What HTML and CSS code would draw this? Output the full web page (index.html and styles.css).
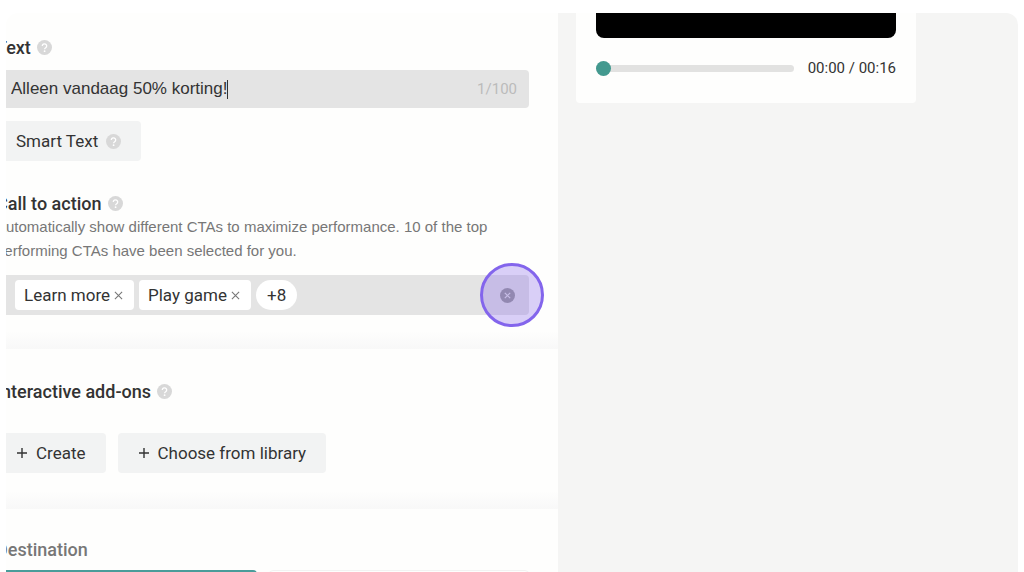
FILE: index.html
```html
<!DOCTYPE html>
<html lang="en">
<head>
    <meta charset="UTF-8">
    <meta name="viewport" content="width=device-width, initial-scale=1.0">
    <title>Ad editor</title>
    <link rel="stylesheet" href="styles.css">
</head>
<body>

<svg class="sprite" aria-hidden="true">
    <symbol id="help" viewBox="0 0 15 15">
        <circle cx="7.5" cy="7.5" r="7.5" fill="#d8d8d8"/>
        <path d="M5.3 6a2.2 2.1 0 1 1 3.4 1.7c-.8.5-1.1.8-1.1 1.5" fill="none" stroke="#fff" stroke-width="1.3"/>
        <circle cx="7.6" cy="11.2" r=".9" fill="#fff"/>
    </symbol>
    <symbol id="cross" viewBox="0 0 10 10">
        <path d="M1 1l8 8M9 1l-8 8" fill="none" stroke="#777" stroke-width="1.2"/>
    </symbol>
    <symbol id="plus" viewBox="0 0 12 12">
        <path d="M6 1v10M1 6h10" fill="none" stroke="#333" stroke-width="1.4"/>
    </symbol>
</svg>

<div class="frame">
    <main class="form">
        <section class="panel first">
            <div class="heading">
                <label class="title" for="ad-text">Text</label>
                <svg class="help"><use href="#help"/></svg>
            </div>
            <div class="field">
                <input type="text" id="ad-text" value="Alleen vandaag 50% korting!">
                <span class="caret"></span>
                <span class="count">1/100</span>
            </div>
            <button class="btn">Smart Text <svg class="help"><use href="#help"/></svg></button>

            <div class="heading cta">
                <h2 class="title">Call to action</h2>
                <svg class="help"><use href="#help"/></svg>
            </div>
            <p class="hint">Automatically show different CTAs to maximize performance. 10 of the top performing CTAs have been selected for you.</p>
            <div class="tags">
                <span class="tag">Learn more<button class="remove" aria-label="Remove Learn more"><svg><use href="#cross"/></svg></button></span>
                <span class="tag">Play game<button class="remove" aria-label="Remove Play game"><svg><use href="#cross"/></svg></button></span>
                <span class="tag more">+8</span>
                <button class="clear" aria-label="Clear all">
                    <svg viewBox="0 0 15 15">
                        <circle cx="7.5" cy="7.5" r="7.5" fill="#999"/>
                        <path d="M4.8 4.8l5.4 5.4M10.2 4.8l-5.4 5.4" fill="none" stroke="#e4e4e4" stroke-width="1.2"/>
                    </svg>
                </button>
                <span class="highlight"></span>
            </div>
        </section>

        <section class="panel">
            <div class="heading">
                <h2 class="title">Interactive add-ons</h2>
                <svg class="help"><use href="#help"/></svg>
            </div>
            <div class="actions">
                <button class="btn"><svg class="plus"><use href="#plus"/></svg>Create</button>
                <button class="btn"><svg class="plus"><use href="#plus"/></svg>Choose from library</button>
            </div>
        </section>

        <section class="panel last">
            <div class="heading">
                <h2 class="title muted">Destination</h2>
            </div>
            <div class="options">
                <div class="option selected"></div>
                <div class="option"></div>
            </div>
        </section>
    </main>

    <aside class="preview">
        <div class="player">
            <div class="video"></div>
            <div class="controls">
                <input type="range" min="0" max="16" value="0" aria-label="Seek">
                <span class="time">00:00 / 00:16</span>
            </div>
        </div>
    </aside>
</div>

</body>
</html>
```
FILE: styles.css
```css
* {
    box-sizing: border-box;
}
body {
    margin: 0;
    background: #fff;
    font-family: Roboto, 'Liberation Sans', sans-serif;
    font-size: 17px;
    color: #333;
}
button, input {
    font: inherit;
    color: inherit;
    border: none;
}
button {
    cursor: pointer;
}
.sprite {
    display: none;
}
.frame {
    display: flex;
    height: calc(100vh - 13px);
    margin: 13px 6px 0;
    border-radius: 12px 12px 0 0;
    overflow: hidden;
}

/* left column, scrolled a little under the frame edge */
.form {
    flex: 0 0 562px;
    margin-left: -10px;
}
.panel {
    padding: 30px 29px 36px 0;
    background: linear-gradient(to top, #f8f8f8, #fefefd 18px);
}
.panel.first {
    padding-top: 22px;
    padding-bottom: 34px;
}
.panel.last {
    padding-top: 28px;
    background: #fefefd;
}
.heading {
    display: flex;
    align-items: center;
    gap: 6px;
    height: 24px;
}
.title {
    margin: 0;
    font-size: 18px;
    font-weight: 500;
}
.title.muted {
    color: #777;
}
.help {
    width: 15px;
    height: 15px;
}
.field, .tags {
    display: flex;
    align-items: center;
    background: #e4e4e4;
    border-radius: 4px;
}
.field {
    height: 38px;
    margin: 11px 0 13px;
    padding: 0 12px 0 15px;
}
.field input {
    field-sizing: content;
    padding: 0;
    background: none;
    outline: none;
    font-family: 'Liberation Sans', sans-serif;
}
.caret {
    width: 1px;
    height: 19px;
    background: #333;
}
.count {
    margin-left: auto;
    font-size: 15px;
    color: #bbb;
}
.btn {
    display: inline-flex;
    align-items: center;
    gap: 8px;
    height: 40px;
    padding: 0 20px;
    background: #f2f3f3;
    border-radius: 4px;
}
.cta {
    margin-top: 30px;
}
.hint {
    margin: 0 0 12px;
    font-family: 'Liberation Sans', sans-serif;
    font-size: 15px;
    line-height: 24px;
    color: #777;
}
.tags {
    position: relative;
    gap: 5px;
    height: 40px;
    padding: 0 14px 0 19px;
}
.tag {
    display: flex;
    align-items: center;
    gap: 4px;
    height: 30px;
    padding: 0 11px 0 9px;
    background: #fff;
    border-radius: 4px;
}
.tag.more {
    padding: 0 11px;
    border-radius: 15px;
}
.remove, .clear {
    display: flex;
    padding: 0;
    background: none;
}
.remove svg {
    width: 9px;
    height: 9px;
}
.clear {
    margin-left: auto;
}
.clear svg {
    width: 15px;
    height: 15px;
}
.highlight {
    position: absolute;
    top: -12px;
    right: -15px;
    width: 64px;
    height: 64px;
    border: 3px solid #8365ec;
    border-radius: 50%;
    background: rgba(131, 101, 236, 0.3);
    pointer-events: none;
}
.actions {
    display: flex;
    gap: 12px;
    margin-top: 30px;
}
.plus {
    width: 12px;
    height: 12px;
}
.options {
    display: grid;
    grid-template-columns: 1fr 1fr;
    gap: 12px;
    margin-top: 9px;
}
.option {
    height: 60px;
    border: 1px solid #f2f2f2;
    border-radius: 4px;
}
.option.selected {
    border: 2px solid #4a9c9a;
}

/* right column */
.preview {
    flex: 1;
    padding-left: 18px;
    background: #f5f5f4;
}
.player {
    max-width: 340px;
    padding: 0 20px 25px;
    background: #fefefd;
    border-radius: 0 0 4px 4px;
}
.video {
    height: 25px;
    background: #000;
    border-radius: 0 0 8px 8px;
}
.controls {
    display: flex;
    align-items: center;
    gap: 14px;
    height: 20px;
    margin-top: 20px;
}
.controls input {
    flex: 1;
    min-width: 0;
    height: 7px;
    margin: 0;
    appearance: none;
    background: #e2e2e1;
    border-radius: 4px;
}
.controls input::-webkit-slider-thumb {
    appearance: none;
    width: 15px;
    height: 15px;
    background: #43998f;
    border-radius: 50%;
}
.time {
    font-size: 15px;
}
```
